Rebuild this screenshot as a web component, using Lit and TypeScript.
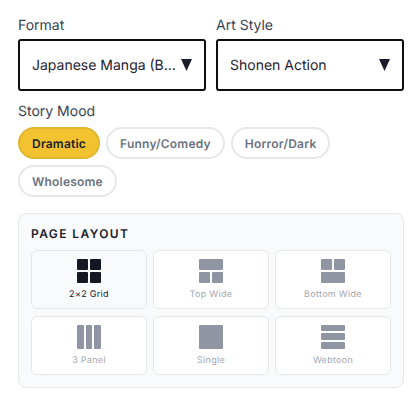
import { LitElement, html, css, svg } from "lit";
import { customElement } from "lit/decorators.js";

const R = (x: number, y: number, w: number, h: number) =>
  svg`<rect x=${x} y=${y} width=${w} height=${h} rx="1"></rect>`;

const layouts = [
  { name: "2×2 Grid", active: true, rects: [R(0, 0, 11, 11), R(13, 0, 11, 11), R(0, 13, 11, 11), R(13, 13, 11, 11)] },
  { name: "Top Wide", active: false, rects: [R(0, 0, 24, 11), R(0, 13, 11, 11), R(13, 13, 11, 11)] },
  { name: "Bottom Wide", active: false, rects: [R(0, 0, 11, 11), R(13, 0, 11, 11), R(0, 13, 24, 11)] },
  { name: "3 Panel", active: false, rects: [R(0, 0, 7, 24), R(9, 0, 6, 24), R(17, 0, 7, 24)] },
  { name: "Single", active: false, rects: [R(0, 0, 24, 24)] },
  { name: "Webtoon", active: false, rects: [R(0, 0, 24, 6), R(0, 8, 24, 7), R(0, 17, 24, 7)] },
];

const moods = ["Dramatic", "Funny/Comedy", "Horror/Dark", "Wholesome"];

@customElement("app-root")
export class AppRoot extends LitElement {
  static styles = css`
    :host {
      display: block;
      width: 420px;
      height: 405px;
      background: #fff;
      box-sizing: border-box;
      padding: 17px 16px 0 18px;
      font-family: Inter, "Liberation Sans", sans-serif;
      color: #1a1d29;
      text-rendering: geometricPrecision;
    }
    .fields {
      display: grid;
      grid-template-columns: 188px 188px;
      gap: 10px;
    }
    .label {
      font-size: 14px;
      line-height: 17px;
      color: #374151;
      margin-bottom: 5px;
    }
    .select {
      box-sizing: border-box;
      height: 52px;
      border: 2px solid #0d0d12;
      border-radius: 3px;
      background: #fff;
      display: flex;
      align-items: center;
      gap: 3px;
      padding: 0 12px;
      font-size: 14px;
      font-weight: 400;
      color: #1f2230;
    }
    .select .text {
      flex: 1;
      min-width: 0;
      white-space: nowrap;
      overflow: hidden;
      text-overflow: ellipsis;
    }
    .select svg {
      flex: none;
      width: 11px;
      height: 12px;
      fill: #1a1d29;
    }
    .mood {
      margin-top: 12px;
    }
    .mood .label {
      margin-bottom: 7px;
    }
    .pills {
      display: flex;
      flex-wrap: wrap;
      gap: 6px;
      width: 386px;
    }
    .pill {
      box-sizing: border-box;
      height: 32px;
      display: flex;
      align-items: center;
      padding: 0 12px;
      border: 2px solid #e5e7eb;
      border-radius: 16px;
      background: #fff;
      font-size: 12px;
      font-weight: 600;
      letter-spacing: 0.22px;
      color: #6b7280;
    }
    .pill.on {
      background: #f2c230;
      border-color: #e2b52e;
      color: #1a1d29;
    }
    .panel {
      box-sizing: border-box;
      width: 386px;
      margin-top: 16px;
      padding: 12px;
      border: 1px solid #e5e7eb;
      border-radius: 8px;
      background: #f9fafb;
    }
    .panel h3 {
      margin: 0 0 9px;
      font-size: 12px;
      line-height: 15px;
      font-weight: 600;
      letter-spacing: 1.4px;
      color: #1a1d29;
    }
    .grid {
      display: grid;
      grid-template-columns: repeat(3, 1fr);
      gap: 7px 6px;
    }
    .tile {
      box-sizing: border-box;
      height: 59px;
      border: 1px solid #e5e7eb;
      border-radius: 6px;
      background: #fff;
      display: flex;
      flex-direction: column;
      align-items: center;
      padding-top: 8px;
      font-size: 9px;
      line-height: 11px;
      letter-spacing: 0.3px;
      color: #a3a7b0;
    }
    .tile svg {
      width: 24px;
      height: 24px;
      fill: #8f95a3;
      margin-bottom: 6px;
    }
    .tile.on {
      background: #f9fafb;
      color: #1a1d29;
    }
    .tile.on svg {
      fill: #141824;
    }
  `;

  private sel(label: string, value: string) {
    return html`<div>
      <div class="label">${label}</div>
      <div class="select">
        <span class="text">${value}</span>
        <svg viewBox="0 0 11 12"><polygon points="0,0 11,0 5.5,12"></polygon></svg>
      </div>
    </div>`;
  }

  render() {
    return html`
      <div class="fields">
        ${this.sel("Format", "Japanese Manga (Black & White)")}
        ${this.sel("Art Style", "Shonen Action")}
      </div>
      <div class="mood">
        <div class="label">Story Mood</div>
        <div class="pills">
          ${moods.map((m, i) => html`<div class="pill ${i === 0 ? "on" : ""}">${m}</div>`)}
        </div>
      </div>
      <div class="panel">
        <h3>PAGE LAYOUT</h3>
        <div class="grid">
          ${layouts.map(
            (l) => html`<div class="tile ${l.active ? "on" : ""}">
              <svg viewBox="0 0 24 24">${l.rects}</svg>
              <span>${l.name}</span>
            </div>`
          )}
        </div>
      </div>
    `;
  }
}
